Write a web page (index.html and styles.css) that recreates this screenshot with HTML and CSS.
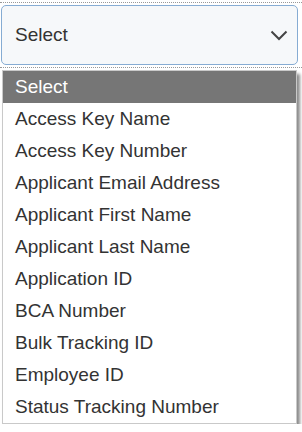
FILE: index.html
```html
<!DOCTYPE html>
<html lang="en">
<head>
  <meta charset="UTF-8">
  <title>Search By</title>
  <link rel="stylesheet" href="styles.css">
</head>
<body>
<div class="field">
  <div class="select">
    <span class="select-value">Select</span>
    <svg class="chevron" width="18" height="11" viewBox="0 0 18 11">
      <path d="M1.5 1.5 L9 9 L16.5 1.5" fill="none" stroke="#444" stroke-width="2"/>
    </svg>
  </div>
</div>
<ul class="options">
  <li class="selected">Select</li>
  <li>Access Key Name</li>
  <li>Access Key Number</li>
  <li>Applicant Email Address</li>
  <li>Applicant First Name</li>
  <li>Applicant Last Name</li>
  <li>Application ID</li>
  <li>BCA Number</li>
  <li>Bulk Tracking ID</li>
  <li>Employee ID</li>
  <li>Status Tracking Number</li>
</ul>
</body>
</html>
```

FILE: styles.css
```css
body {
  margin: 0;
  background: #fff;
  font-family: "Liberation Sans", Arial, sans-serif;
  color: #333;
}

.field {
  margin-top: 2px;
  padding: 2px 0;
  border-top: 1px dotted #999;
  border-bottom: 1px dotted #999;
}

.select {
  display: flex;
  align-items: center;
  justify-content: space-between;
  box-sizing: border-box;
  height: 60px;
  margin: 0 4px 0 1px;
  padding: 0 9px 0 13px;
  border: 1px solid #86acd3;
  border-radius: 5px;
  background: #f6f8fa;
  font-size: 19px;
}

.options {
  list-style: none;
  margin: 2px 5px 0 2px;
  padding: 0;
  border: 1px solid #c9c9c9;
  background: #fff;
  box-shadow: 3px 4px 3px rgba(0, 0, 0, .45);
  font-size: 19px;
}

.options li {
  height: 32px;
  line-height: 32px;
  padding: 0 12px;
}

.options .selected {
  background: #767676;
  color: #fff;
}
```
